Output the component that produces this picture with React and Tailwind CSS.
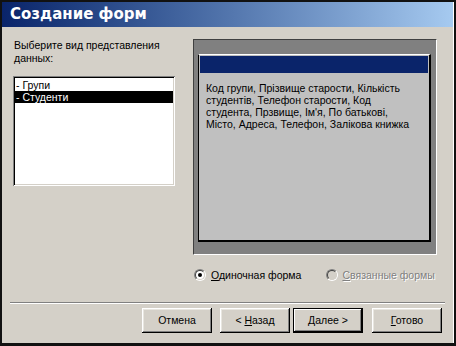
import React from 'react';

const font = { fontFamily: '"Liberation Sans", Arial, sans-serif' };

function Radio({ checked, disabled }) {
    return (
        <div className="w-[12px] h-[12px] shrink-0 rounded-full border border-t-[#808080] border-l-[#808080] border-b-white border-r-white">
            <div className={"w-full h-full rounded-full border border-t-[#404040] border-l-[#404040] border-b-[#d4d0c8] border-r-[#d4d0c8] flex items-center justify-center " + (disabled ? "bg-[#d4d0c8]" : "bg-white")}>
                {checked && <div className="w-[4px] h-[4px] rounded-full bg-black" />}
            </div>
        </div>
    );
}

function Button({ children, isDefault }) {
    return (
        <div className={"w-[70px] h-[25px] flex items-center justify-center text-[10.5px] text-black bg-[#d4d0c8] " +
            (isDefault
                ? "border border-black shadow-[inset_-1px_-1px_0_#000,inset_1px_1px_0_#fff,inset_-2px_-2px_0_#808080]"
                : "shadow-[inset_-1px_-1px_0_#000,inset_1px_1px_0_#fff,inset_-2px_-2px_0_#808080,inset_2px_2px_0_#e8e6e0]")}>
            <span className="whitespace-pre">{children}</span>
        </div>
    );
}

export default function App() {
    return (
        <div style={font} className="w-[456px] h-[346px] flex flex-col bg-[#d4d0c8] border-t-2 border-l-2 border-r-2 border-b-[3px] border-[#111]">
            <div className="flex flex-col flex-1 border-r border-white">
                {/* title bar */}
                <div className="h-[25px] flex items-center pl-[8px] bg-gradient-to-r from-[#0a246a] to-[#a6caf0]">
                    <span style={{ fontFamily: '"DejaVu Sans", Verdana, sans-serif' }} className="text-white font-bold text-[15px] leading-none">Создание форм</span>
                </div>

                <div className="flex pt-[12px] pl-[11px]">
                    {/* left column */}
                    <div className="w-[162px] flex flex-col">
                        <p className="pl-[1px] text-[10.5px] leading-[13px] text-black">
                            Выберите вид представления<br />данных:
                        </p>
                        <div className="mt-[11px] h-[110px] bg-white p-[2px] shadow-[inset_1px_1px_0_#808080,inset_-1px_-1px_0_#fff,inset_2px_2px_0_#000,inset_-2px_-2px_0_#d4d0c8]">
                            <div className="text-[10.5px] leading-[12px] pt-[1px]">
                                <div className="pl-[1px] text-black">- Групи</div>
                                <div className="pl-[1px] bg-black text-white">- Студенти</div>
                            </div>
                        </div>
                    </div>

                    {/* right column */}
                    <div className="ml-[18px] w-[244px] flex flex-col">
                        <div className="h-[216px] bg-[#808080] border-t border-l border-[#404040] border-r border-b border-r-white border-b-white pt-[14px] pl-[4px] pr-[5px] pb-[12px]">
                            <div className="h-full bg-[#c0c0c0] border-t border-t-white border-l border-l-black border-r-2 border-r-black border-b-2 border-b-black flex flex-col">
                                <div className="h-[17px] mx-[1px] mt-[1px] bg-[#0a246a]" />
                                <p className="mt-[9px] pl-[7px] text-[10.5px] leading-[12px] text-black">
                                    Код групи, Прізвище старости, Кількість<br />
                                    студентів, Телефон старости, Код<br />
                                    студента, Прзвище, Ім'я, По батькові,<br />
                                    Місто, Адреса, Телефон, Залікова книжка
                                </p>
                            </div>
                        </div>
                        <div className="mt-[14px] flex items-center text-[10.5px] leading-[12px] whitespace-nowrap">
                            <div className="ml-[1px] flex items-center gap-[5px]">
                                <Radio checked />
                                <span className="text-black"><span className="underline">О</span>диночная форма</span>
                            </div>
                            <div className="ml-[25px] flex items-center gap-[4px]">
                                <Radio disabled />
                                <span className="text-[#808080] [text-shadow:1px_1px_0_#fff]"><span className="underline">С</span>вязанные формы</span>
                            </div>
                        </div>
                    </div>
                </div>

                {/* separator */}
                <div className="mt-[21px] mx-[8px] border-t border-t-[#808080] border-b border-b-white" />

                {/* buttons */}
                <div className="mt-[4px] flex pl-[140px]">
                    <Button>Отмена</Button>
                    <div className="ml-[8px]">
                        <Button>&lt; <span className="underline">Н</span>азад</Button>
                    </div>
                    <div className="ml-[3px]">
                        <Button isDefault><span className="underline">Д</span>алее &gt;</Button>
                    </div>
                    <div className="ml-[9px]">
                        <Button><span className="underline">Г</span>отово</Button>
                    </div>
                </div>
            </div>
        </div>
    );
}
